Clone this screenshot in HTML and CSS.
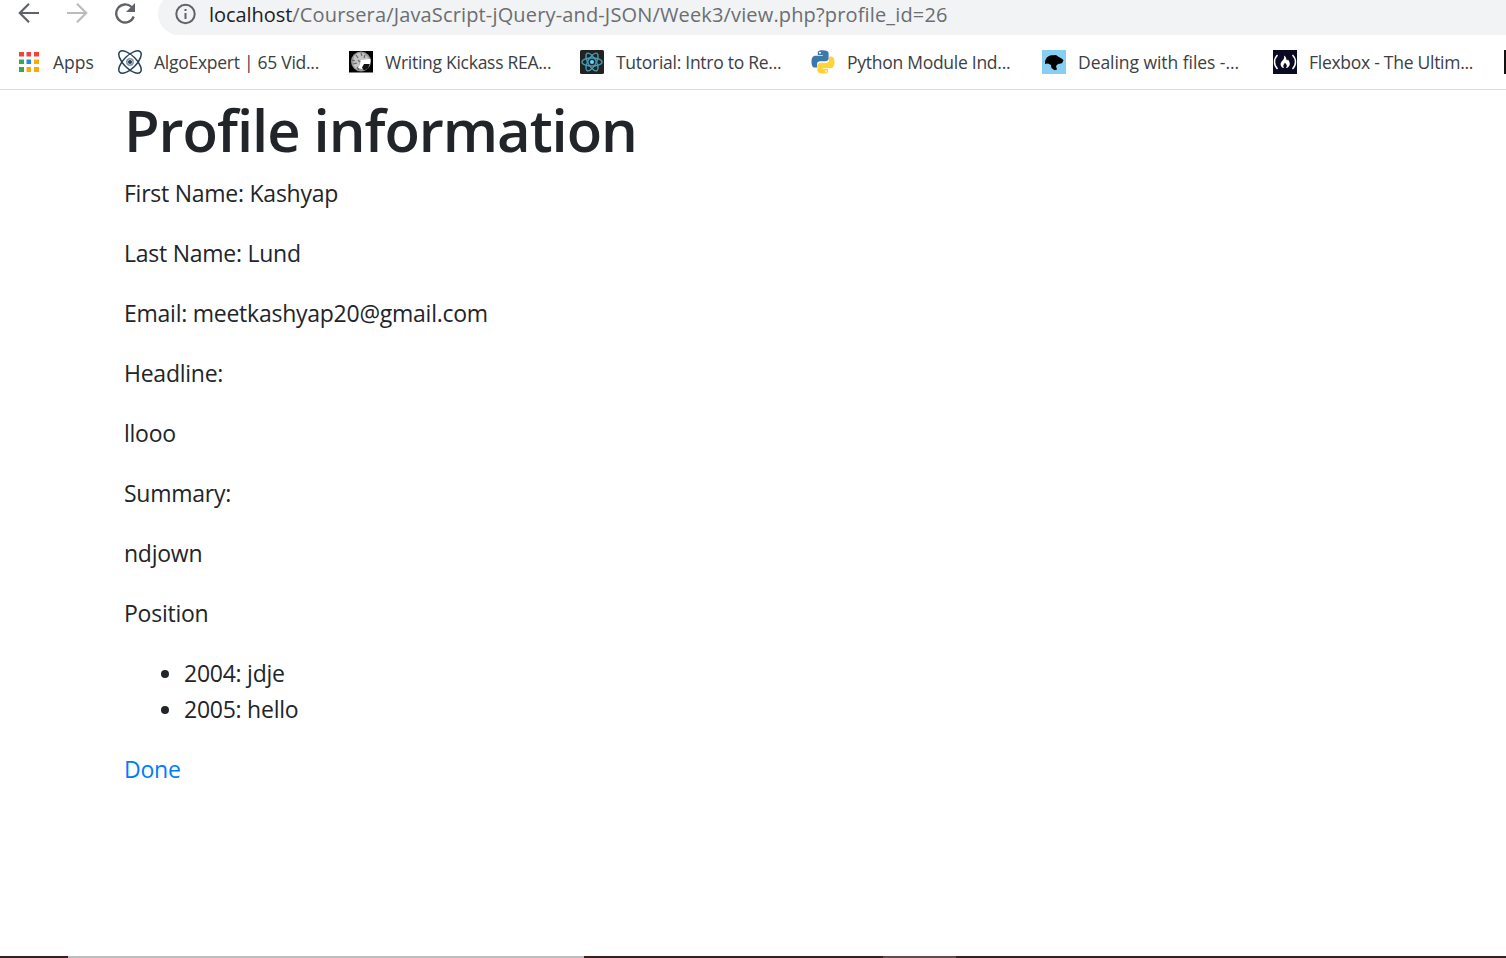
FILE: index.html
```html
<!DOCTYPE html>
<html lang="en">
<head>
<meta charset="utf-8">
<title>Profile information</title>
<link rel="stylesheet" href="styles.css">
</head>
<body>
<header class="browser">
  <div class="toolbar">
    <svg class="nav-icon" viewBox="0 0 24 24"><path d="M22 12H3M12 2.800 2.800 12l9.200 9.200" fill="none" stroke="#5f6368" stroke-width="2.200"/></svg>
    <svg class="nav-icon" viewBox="0 0 24 24"><path d="M2 12h19M12 2.800l9.200 9.200-9.200 9.200" fill="none" stroke="#babcbe" stroke-width="2.200"/></svg>
    <svg class="nav-icon" viewBox="0 0 24 24"><path d="M20.700 15.500A9 9 0 1 1 18.500 6" fill="none" stroke="#5f6368" stroke-width="2.300"/><path d="M22 2v9h-9z" fill="#5f6368"/></svg>
    <div class="address">
      <svg class="info" viewBox="0 0 22 22"><circle cx="11" cy="11" r="9.200" fill="none" stroke="#5f6368" stroke-width="2"/><path d="M10 6h2v2h-2zM10 10h2v6h-2z" fill="#5f6368"/></svg>
      <span class="url"><span class="host">localhost</span>/Coursera/JavaScript-jQuery-and-JSON/Week3/view.php?profile_id=26</span>
    </div>
  </div>
  <nav class="bookmarks">
    <a class="bookmark apps"><svg class="fav" viewBox="0 0 24 24"><path fill="#f44336" d="M2 2h5v4.500H2zM9.500 2h4.500v4.500h-4.500zM17 2h5v4.500h-5z"/><path fill="#34a853" d="M2 9.500h5v4.500H2zM2 17h5v5H2z"/><path fill="#1e88f5" d="M9.500 9.500h4.500v4.500h-4.500z"/><path fill="#fbaa05" d="M17 9.500h5v4.500h-5zM9.500 17h4.500v5h-4.500zM17 17h5v5h-5z"/></svg><span class="label">Apps</span></a>
    <a class="bookmark"><svg class="fav" viewBox="0 0 24 24" fill="none" stroke="#24425d" stroke-width="1.500"><ellipse cx="12" cy="12" rx="14.500" ry="6.300" transform="rotate(45 12 12)"/><ellipse cx="12" cy="12" rx="14.500" ry="6.300" transform="rotate(-45 12 12)"/><circle cx="12" cy="12" r="3.200" stroke="#8495a5"/><circle cx="12" cy="12" r="1.300" fill="#24425d"/></svg><span class="label">AlgoExpert | 65 Vid...</span></a>
    <a class="bookmark"><svg class="fav" viewBox="0 0 24 24"><path fill="#000" d="M0 1h24v21.500H0z"/><circle cx="12" cy="11.500" r="10" fill="#999"/><path d="M5 6l4-3 5 0 4 3 3 4-5 1-5 1-1 4-3 3-3-4z" fill="#c4c4c4"/><path d="M12 10l9.500-1-.5 5-4 0-4 5-4-1 2-4z" fill="#fff"/><path d="M15 14l5.500 0-1.500 4.500-4 2-2-3z" fill="#111"/><path d="M3 10l3 1M7 5l2 3M4 14l4-1M12 3l1 3M8 17l2 3M9 10l2 2M16 5l-1 3" stroke="#666" stroke-width="1.200"/></svg><span class="label">Writing Kickass REA...</span></a>
    <a class="bookmark"><svg class="fav" viewBox="0 0 24 24"><rect width="24" height="24" rx="1.500" fill="#222"/><g fill="none" stroke="#469db8" stroke-width="1.400"><ellipse cx="12" cy="12" rx="10" ry="4"/><ellipse cx="12" cy="12" rx="10" ry="4" transform="rotate(60 12 12)"/><ellipse cx="12" cy="12" rx="10" ry="4" transform="rotate(120 12 12)"/></g><circle cx="12" cy="12" r="2" fill="#61dafb"/></svg><span class="label">Tutorial: Intro to Re...</span></a>
    <a class="bookmark"><svg class="fav" viewBox="0 0 24 24"><path fill="#3d78aa" d="M11.700.300C6.500.300 6.800 2.500 6.800 2.500V5h5v.800H4.300S.500 5.400.500 11.700s3.300 5.800 3.300 5.800h2.200v-3s-.1-3.300 3.200-3.300h5.300s3.100.1 3.100-3V3.400S18.100.300 11.700.300z"/><circle cx="9" cy="2.700" r="1" fill="#fff"/><path fill="#ffd43b" d="M12.300 23.700c5.200 0 4.900-2.200 4.900-2.200V19h-5v-.8h7.500s3.800.4 3.800-5.900-3.300-5.800-3.300-5.800H18v3s.1 3.300-3.200 3.300H9.500s-3.100-.1-3.100 3v4.800s-.500 3.100 5.900 3.100z"/><circle cx="15" cy="21.300" r="1" fill="#fff"/></svg><span class="label">Python Module Ind...</span></a>
    <a class="bookmark dealing"><svg class="fav" viewBox="0 0 24 24"><path fill="#87cff2" d="M0 0h24v24H0z"/><path d="M3 11.500c1-4 3.500-6.500 8-6.300l3-.2 2 1.500 4 2.300 1.500 1.500-1.500 3-4 .6-2 2.100 1 3.500-2.500.8-3-2.300-.5-3-3-1.500-3 .5z"/></svg><span class="label">Dealing with files -...</span></a>
    <a class="bookmark"><svg class="fav" viewBox="0 0 24 24"><path fill="#0a0a23" d="M0 0h24v24H0z"/><path d="M4.500 5C.500 9 .500 15 4.500 19M19.500 5c4 4 4 10 0 14" fill="none" stroke="#fff" stroke-width="1.500"/><path d="M11 5.500c3 2 2 4 3 5l1-1c3 4 2 6.500-1 8.500h-1c2-3 0-3.500-1-5.500-1 2-2.500 3-1 5.500H10c-3-2-3-4.500-1-7 2-2 2.500-3 2-5.500z" fill="#fff"/></svg><span class="label">Flexbox - The Ultim...</span></a>
    <a class="bookmark"><span class="fav dark"></span></a>
  </nav>
</header>
<main class="container">
  <h1>Profile information</h1>
  <p>First Name: Kashyap</p>
  <p>Last Name: Lund</p>
  <p>Email: meetkashyap20@gmail.com</p>
  <p>Headline:</p>
  <p>llooo</p>
  <p>Summary:</p>
  <p>ndjown</p>
  <p>Position</p>
  <ul>
    <li>2004: jdje</li>
    <li>2005: hello</li>
  </ul>
  <a class="done">Done</a>
</main>
<footer class="edge"><span class="seg-a"></span><span class="seg-b"></span><span class="seg-c"></span><span class="seg-d"></span><span class="seg-e"></span></footer>
</body>
</html>
```
FILE: styles.css
```css
* { box-sizing: border-box; }
body {
  margin: 0;
  height: 958px;
  overflow: hidden;
  display: flex;
  flex-direction: column;
  background: #fff;
  color: #212529;
  font-family: "Open Sans", "Noto Sans", sans-serif;
  font-size: 23px;
  line-height: 36px;
  letter-spacing: -0.25px;
}
.browser { flex: none; height: 90px; border-bottom: 1px solid #dadce0; overflow: hidden; letter-spacing: 0; }
.toolbar { display: flex; height: 35px; padding-left: 17px; }
.nav-icon { flex: none; width: 24px; height: 24px; margin: 1px 24px 0 0; }
.address {
  flex: 1;
  display: flex;
  align-items: flex-end;
  height: 42px;
  margin: -7px 0 0 -3px;
  padding-left: 16px;
  background: #f1f3f4;
  border-radius: 21px 0 0 21px;
}
.info { flex: none; width: 23px; height: 22px; margin: 0 12px 10px 0; }
.url { font-size: 20px; line-height: 28px; margin-bottom: 6px; color: #6b6e72; white-space: nowrap; letter-spacing: 0.15px; }
.host { color: #202124; letter-spacing: -0.05px; }
.bookmarks { display: flex; height: 54px; padding-left: 17px; align-items: center; }
.bookmark { flex: none; display: flex; align-items: center; width: 231px; gap: 12px; font-size: 17.5px; line-height: 24px; letter-spacing: -0.27px; color: #3c4043; white-space: nowrap; }
.apps { width: 101px; letter-spacing: 0; }
.dealing { letter-spacing: -0.05px; }
.label { margin-top: -1px; }
.fav { flex: none; width: 24px; height: 24px; }
.dark { background: #111; }
.container { flex: 1; padding: 4px 124px 0; }
h1 { margin: 0 0 9px; font-size: 58px; line-height: 72px; font-weight: 600; letter-spacing: -1.04px; white-space: nowrap; }
p { margin: 0 0 24px; }
ul { margin: 0 0 24px; padding-left: 60px; }
.done { color: #007bff; }
.edge { flex: none; display: flex; height: 2px; background: #3f1d20; }
.seg-a { width: 68px; }
.seg-b { width: 516px; background: #bdbdbd; }
.seg-c { width: 299px; }
.seg-d { width: 73px; background: #674a4c; }
.seg-e { flex: 1; }
```
